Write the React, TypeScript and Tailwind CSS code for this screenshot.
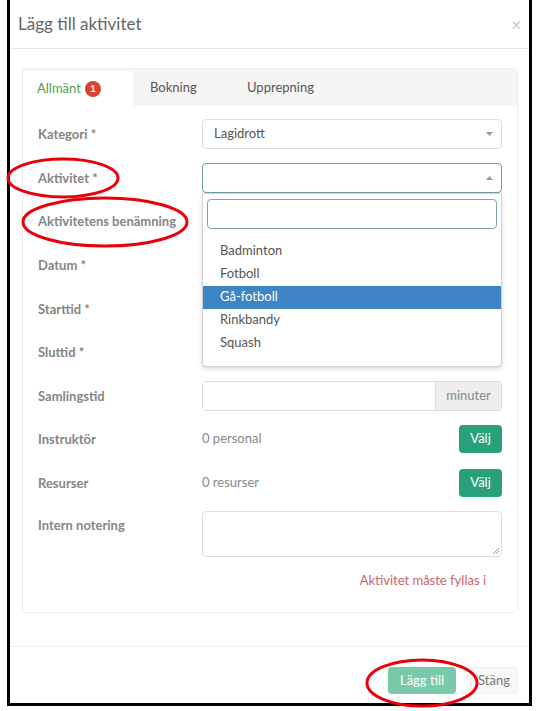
import React from "react";

const labelCls = "w-[164px] shrink-0 text-[13px] font-bold text-[#858585]";
const inputCls = "h-[30px] flex-1 rounded-[4px] border border-[#dcdcdc] bg-white";

function Caret({ up }: { up?: boolean }) {
  return (
    <svg width="7" height="4" viewBox="0 0 7 4" className="text-[#999]">
      {up ? <path d="M0 4 L3.5 0 L7 4 Z" fill="currentColor" /> : <path d="M0 0 L3.5 4 L7 0 Z" fill="currentColor" />}
    </svg>
  );
}

function Row({ label, children, top }: { label: string; children?: React.ReactNode; top?: boolean }) {
  return (
    <div className={`flex ${top ? "items-start" : "items-center"}`}>
      <div className={`${labelCls} ${top ? "pt-[5px]" : "pt-[2px]"}`}>{label}</div>
      <div className="flex flex-1 items-center">{children}</div>
    </div>
  );
}

const options = ["Badminton", "Fotboll", "Gå-fotboll", "Rinkbandy", "Squash"];

export default function App() {
  return (
    <div className="relative h-[711px] w-[550px] bg-white" style={{ fontFamily: "Lato, 'Open Sans', sans-serif" }}>
      <div className="ml-[7px] flex h-[706px] w-[525px] flex-col border-x-[3px] border-b-[3px] border-black">
        {/* header */}
        <div className="flex h-[49px] shrink-0 items-center justify-between border-b border-[#e8e8e8] pl-[8px] pr-[8px]">
          <span className="text-[17px] text-[#666]">Lägg till aktivitet</span>
          <span className="text-[17px] leading-none text-[#c4c4c4]">×</span>
        </div>

        {/* body */}
        <div className="pl-[12px] pr-[11px] pt-[19px] pb-[33px]">
          <div className="rounded-[4px] border border-[#ececec]">
            <div className="flex h-[37px] bg-[#f5f5f5] text-[13px] text-[#555]">
              <div className="mt-[2px] flex w-[110px] items-center gap-[4px] rounded-t-[4px] bg-white pl-[14px]">
                <span className="text-[#4f9a54]">Allmänt</span>
                <span className="flex h-[16px] w-[16px] items-center justify-center rounded-full bg-[#d8432f] text-[10px] font-bold text-white">1</span>
              </div>
              <div className="flex w-[97px] items-center pl-[17px]">Bokning</div>
              <div className="flex items-center pl-[17px]">Upprepning</div>
            </div>

            <div className="relative flex flex-col gap-[13.6px] bg-white px-[15px] pt-[13px] pb-[22px]">
              <Row label="Kategori *">
                <div className={`${inputCls} flex items-center justify-between pl-[11px] pr-[8px] text-[13px] text-[#555]`}>
                  <span>Lagidrott</span>
                  <Caret />
                </div>
              </Row>
              <Row label="Aktivitet *">
                <div className={`${inputCls} relative flex items-center justify-end !border-[#6f9ea3] pr-[8px]`}>
                  <Caret up />
                  {/* open dropdown */}
                  <div className="absolute left-[-1px] right-[-1px] top-[29px] z-10 h-[174px] rounded-b-[4px] border border-[#d0d0d0] bg-white shadow-[0_2px_4px_rgba(0,0,0,0.15)]">
                    <div className="mx-[4px] mt-[5px] h-[30px] rounded-[4px] border border-[#7ea6aa]" />
                    <ul className="pt-[11px] text-[13px] text-[#555]">
                      {options.map((o) => (
                        <li
                          key={o}
                          className={`flex h-[23px] items-center pl-[17px] ${o === "Gå-fotboll" ? "bg-[#3f84c5] text-white" : ""}`}
                        >
                          {o}
                        </li>
                      ))}
                    </ul>
                  </div>
                </div>
              </Row>
              <Row label="Aktivitetens benämning">
                <div className={inputCls} />
              </Row>
              <Row label="Datum *">
                <div className={inputCls} />
              </Row>
              <Row label="Starttid *">
                <div className={inputCls} />
              </Row>
              <Row label="Sluttid *">
                <div className={inputCls} />
              </Row>
              <Row label="Samlingstid">
                <div className="flex h-[30px] flex-1 overflow-hidden rounded-[4px] border border-[#dcdcdc]">
                  <div className="flex-1 bg-white" />
                  <div className="flex w-[66px] items-center justify-center border-l border-[#dcdcdc] bg-[#eeeeee] text-[13px] text-[#888]">
                    minuter
                  </div>
                </div>
              </Row>
              <Row label="Instruktör">
                <div className="flex h-[30px] flex-1 items-center justify-between">
                  <span className="text-[13px] text-[#888]">0 personal</span>
                  <span className="flex h-[28px] w-[43px] items-center justify-center rounded-[4px] bg-[#28a07b] text-[13px] text-white">Välj</span>
                </div>
              </Row>
              <Row label="Resurser">
                <div className="flex h-[30px] flex-1 items-center justify-between">
                  <span className="text-[13px] text-[#888]">0 resurser</span>
                  <span className="flex h-[28px] w-[43px] items-center justify-center rounded-[4px] bg-[#28a07b] text-[13px] text-white">Välj</span>
                </div>
              </Row>
              <Row label="Intern notering" top>
                <div className="relative h-[46px] flex-1 rounded-[4px] border border-[#dcdcdc] bg-white">
                  <svg width="7" height="7" viewBox="0 0 7 7" className="absolute bottom-[2px] right-[2px]">
                    <path d="M1 7 L7 1 M4 7 L7 4" stroke="#999" strokeWidth="1" />
                  </svg>
                </div>
              </Row>
              <div className="pr-[16px] text-right text-[13px] text-[#c9656a]">Aktivitet måste fyllas i</div>
            </div>
          </div>
        </div>

        {/* footer */}
        <div className="flex flex-1 items-start justify-end gap-[14px] border-t border-[#ececec] pr-[11px] pt-[20px]">
          <span className="flex h-[27px] items-center rounded-[4px] bg-[#78caab] px-[12px] text-[13px] text-white">Lägg till</span>
          <span className="flex h-[27px] items-center rounded-[4px] border border-[#eeeeee] bg-[#f8f8f8] px-[7px] text-[13px] text-[#777]">Stäng</span>
        </div>
      </div>

      {/* red annotation circles */}
      <svg className="pointer-events-none absolute left-0 top-0" width="550" height="711" viewBox="0 0 550 711">
        <ellipse cx="63" cy="178" rx="55" ry="19" fill="none" stroke="#e8000b" strokeWidth="3" />
        <ellipse cx="105" cy="222" rx="82" ry="24" fill="none" stroke="#e8000b" strokeWidth="3" />
        <ellipse cx="422" cy="683" rx="55" ry="23" fill="none" stroke="#e8000b" strokeWidth="3" />
      </svg>
    </div>
  );
}
